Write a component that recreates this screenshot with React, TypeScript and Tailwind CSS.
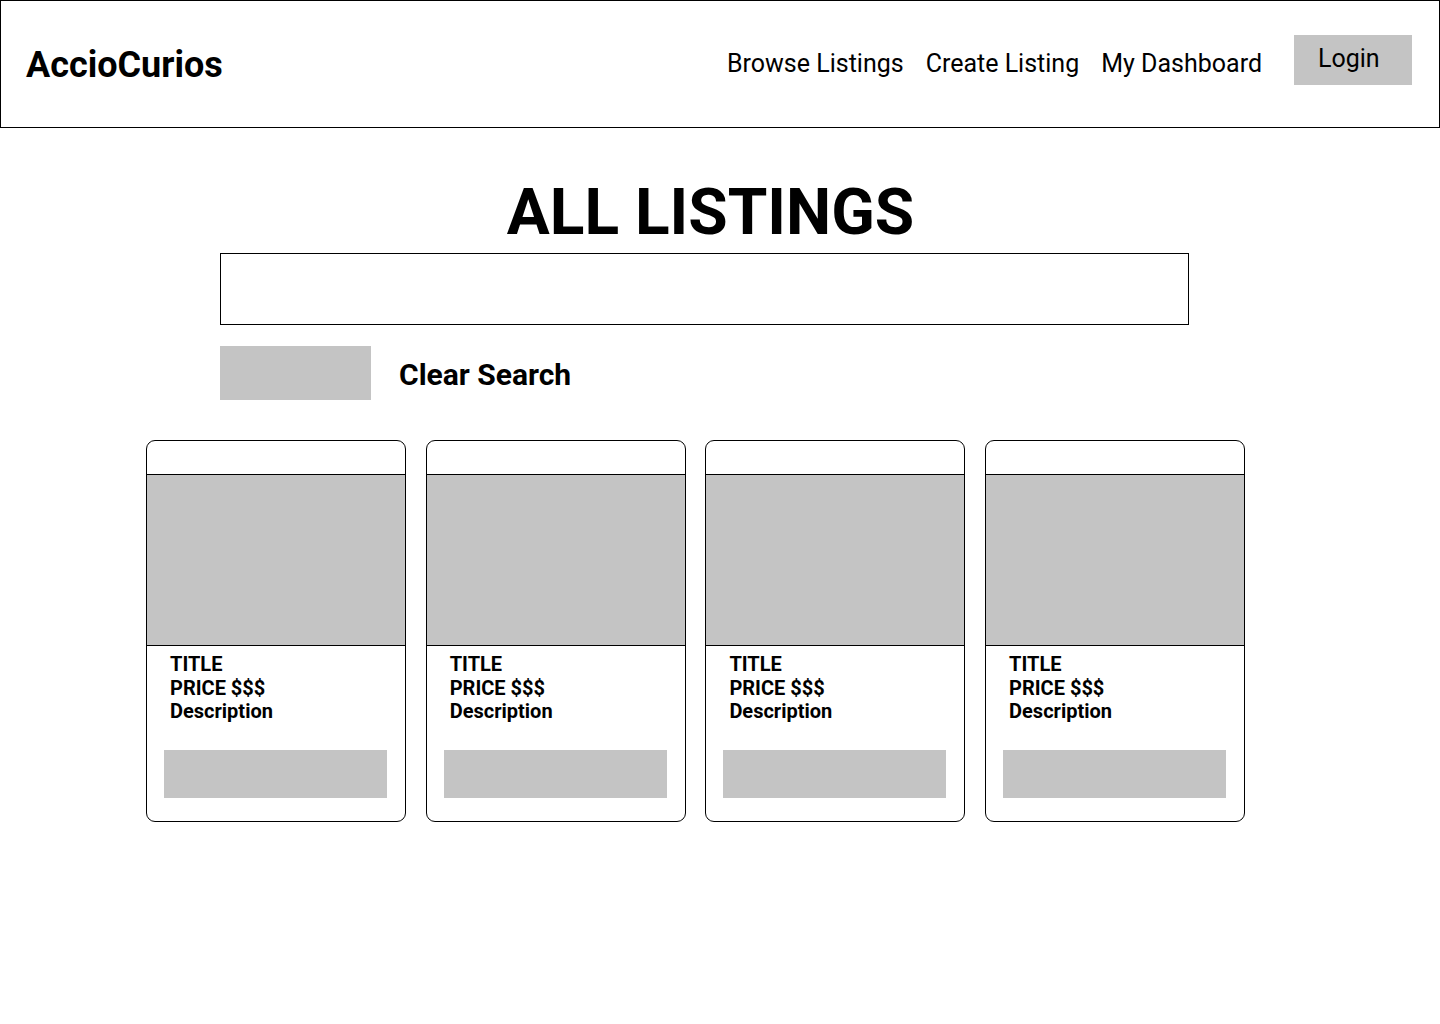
const LISTINGS = [1, 2, 3, 4];

function ListingCard() {
  return (
    <div className="flex h-[382px] w-[260px] flex-col overflow-hidden rounded-[9px] border border-black bg-white">
      <div className="h-[34px] border-b border-black" />
      <div className="h-[171px] border-b border-black bg-[#c4c4c4]" />
      <div className="pl-[23px] pt-[7px] text-[20px] font-bold leading-[23.5px] text-black">
        <p>TITLE</p>
        <p>PRICE $$$</p>
        <p>Description</p>
      </div>
      <button className="mx-[17px] mb-[23px] mt-auto h-[48px] w-[223px] bg-[#c4c4c4]" />
    </div>
  );
}

export default function App() {
  return (
    <div className="min-h-[1024px] bg-white font-['Roboto',sans-serif] text-black">
      {/* header */}
      <header className="flex h-[128px] items-center justify-between border border-black pl-[25px] pr-[27px]">
        <h1 className="mt-[2px] text-[36px] font-bold leading-[42px]">AccioCurios</h1>
        <nav className="mb-[8px] flex items-center">
          <div className="ml-[2px] flex items-center gap-[22px] text-[25px] leading-[28px]">
            <a className="mt-[7px]">Browse Listings</a>
            <a className="mt-[7px]">Create Listing</a>
            <a className="mt-[7px]">My Dashboard</a>
          </div>
          <button className="ml-[32px] h-[50px] w-[118px] bg-[#c4c4c4] pb-[2px] pl-[24px] text-left text-[25px] leading-[28px]">
            Login
          </button>
        </nav>
      </header>

      {/* search */}
      <h2 className="mt-[53px] pr-[19px] text-center text-[64px] font-bold leading-[64px]">ALL LISTINGS</h2>
      <input className="ml-[220px] mt-[8px] block h-[72px] w-[969px] border border-black outline-none" />
      <div className="ml-[220px] mt-[21px] flex items-center gap-[28px]">
        <button className="h-[54px] w-[151px] bg-[#c4c4c4]" />
        <span className="mt-[3px] text-[30px] font-bold leading-[34px]">Clear Search</span>
      </div>

      {/* listings */}
      <div className="ml-[146px] mt-[40px] flex gap-[19.7px]">
        {LISTINGS.map((id) => (
          <ListingCard key={id} />
        ))}
      </div>
    </div>
  );
}
